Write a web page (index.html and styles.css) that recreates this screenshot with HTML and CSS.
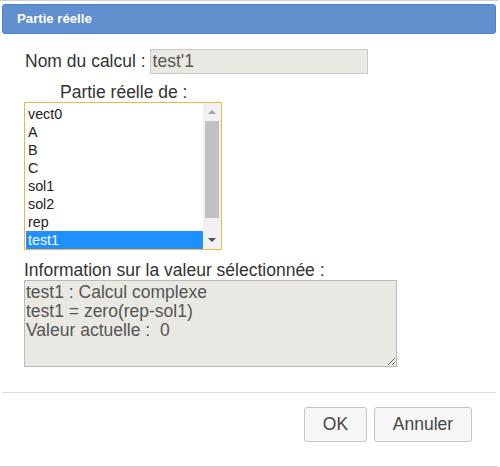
FILE: index.html
```html
<!DOCTYPE html>
<html lang="fr">
<head>
<meta charset="utf-8">
<title>Partie réelle</title>
<link rel="stylesheet" href="styles.css">
</head>
<body>
<div class="dialog">
  <div class="titlebar">Partie réelle</div>

  <div class="content">
    <div class="name-row">
      <label class="name-label" for="calc-name">Nom du calcul :</label>
      <input id="calc-name" class="name-input" type="text" value="test'1" readonly>
    </div>

    <div class="list-label">Partie réelle de :</div>

    <div class="listbox">
      <ul class="options">
        <li class="option">vect0</li>
        <li class="option">A</li>
        <li class="option">B</li>
        <li class="option">C</li>
        <li class="option">sol1</li>
        <li class="option">sol2</li>
        <li class="option">rep</li>
        <li class="option selected">test1</li>
      </ul>
      <div class="scrollbar">
        <span class="arrow arrow-up"></span>
        <span class="thumb"></span>
        <span class="arrow arrow-down"></span>
      </div>
    </div>

    <div class="info-label">Information sur la valeur sélectionnée :</div>
    <textarea class="info" readonly>test1 : Calcul complexe
test1 = zero(rep-sol1)
Valeur actuelle :  0</textarea>
  </div>

  <div class="buttonpane">
    <button class="btn btn-ok" type="button">OK</button>
    <button class="btn btn-cancel" type="button">Annuler</button>
  </div>
</div>
</body>
</html>
```

FILE: styles.css
```css
* {
  box-sizing: border-box;
}

html, body {
  margin: 0;
  padding: 0;
  background: #ffffff;
}

body {
  font-family: "Liberation Sans", Arial, sans-serif;
  color: #333333;
}

.dialog {
  width: 498px;
  height: 467px;
  border-top: 1px solid #cfcfcf;
  border-bottom: 1px solid #cfcfcf;
  padding: 3px 2px 0 2px;
  display: flex;
  flex-direction: column;
}

/* header bar */
.titlebar {
  height: 30px;
  background: #6090cd;
  border: 1px solid #4d82cf;
  border-radius: 3px;
  color: #ffffff;
  font-weight: bold;
  font-size: 13.2px;
  line-height: 28px;
  padding-left: 14px;
}

.content {
  display: flex;
  flex-direction: column;
  align-items: flex-start;
  padding-left: 22px;
  height: 359px;
  border-bottom: 1px solid #dddddd;
}

.name-row {
  display: flex;
  align-items: center;
  gap: 4px;
  margin-top: 15px;
  padding-left: 1px;
  font-size: 17.5px;
}

.name-input {
  width: 218px;
  height: 25px;
  margin: 0;
  padding: 0 2px;
  border: 1px solid #c8c8c8;
  background: #e9e8e2;
  color: #555555;
  font-family: "Liberation Sans", Arial, sans-serif;
  font-size: 17.5px;
  outline: none;
}

.list-label {
  margin-top: 8px;
  padding-left: 36px;
  font-size: 17.5px;
  line-height: 20px;
  height: 20px;
}

/* list of selectable values */
.listbox {
  display: flex;
  width: 198px;
  height: 148px;
  border: 1px solid #efb54c;
  background: #ffffff;
}

.options {
  list-style: none;
  margin: 0;
  padding: 2px 0 0 1px;
  flex: 1;
  font-size: 14.3px;
  color: #222222;
}

.option {
  height: 18px;
  line-height: 18px;
  padding-left: 2px;
}

.option.selected {
  background: #1e90ff;
  color: #ffffff;
}

.scrollbar {
  width: 18px;
  background: #f1f1f1;
  display: flex;
  flex-direction: column;
  align-items: center;
}

.thumb {
  width: 14px;
  height: 97px;
  background: #c1c1c1;
}

.arrow {
  width: 0;
  height: 0;
  border-left: 4px solid transparent;
  border-right: 4px solid transparent;
}

.arrow-up {
  border-bottom: 4px solid #a3a3a3;
  margin: 7px 0 7px;
}

.arrow-down {
  border-top: 4px solid #505050;
  margin-top: 20px;
}

.info-label {
  margin-top: 10px;
  font-size: 17.5px;
  line-height: 20px;
}

.info {
  width: 373px;
  height: 87px;
  margin: 0;
  padding: 2px 1px;
  border: 1px solid #b9b9b9;
  background: #e9e8e2;
  color: #555555;
  font-family: "Liberation Sans", Arial, sans-serif;
  font-size: 17.5px;
  line-height: 19px;
  resize: both;
  outline: none;
}

/* footer with actions */
.buttonpane {
  display: flex;
  justify-content: flex-end;
  gap: 7px;
  padding: 14px 24px 0 0;
}

.btn {
  height: 35px;
  margin: 0;
  border: 1px solid #c5c5c5;
  border-radius: 3px;
  background: #f6f6f6;
  color: #454545;
  font-family: "Liberation Sans", Arial, sans-serif;
  font-size: 17.5px;
}

.btn-ok {
  width: 63px;
}

.btn-cancel {
  width: 98px;
}
```
